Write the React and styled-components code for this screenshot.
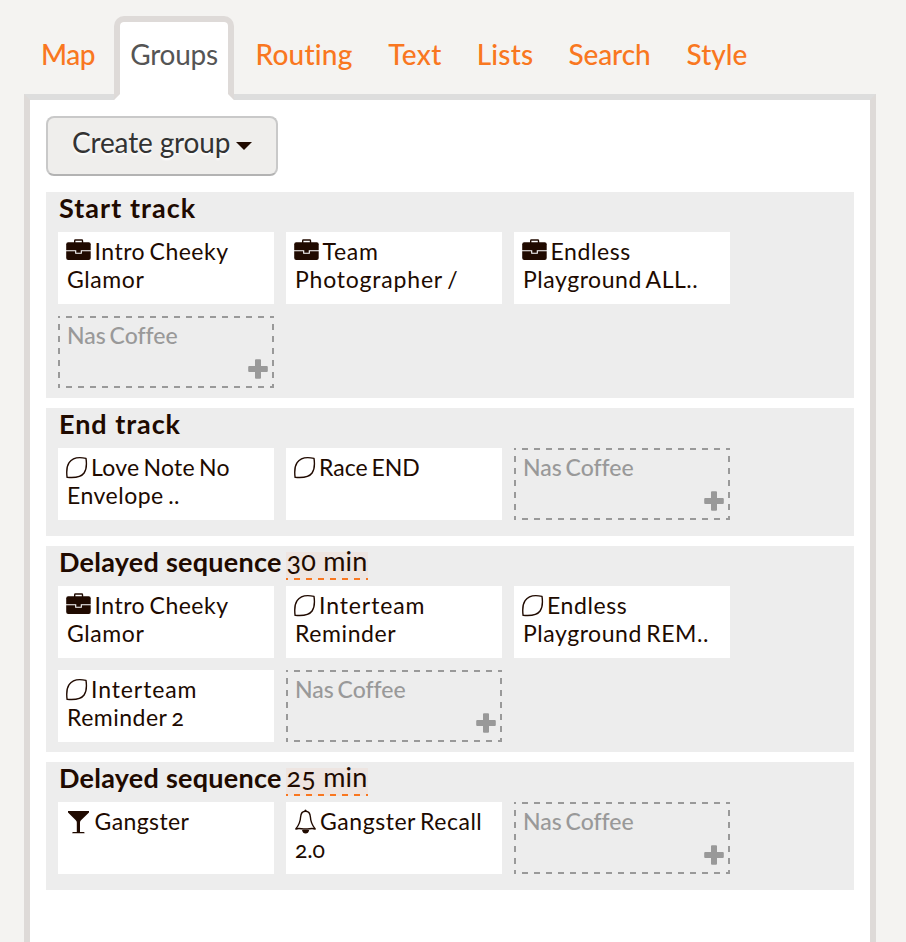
import React from 'react';
import styled, { createGlobalStyle, css } from 'styled-components';

const ink = '#200a00';
const orange = '#f97720';

const GlobalStyle = createGlobalStyle`
  * { box-sizing: border-box; }
  body {
    margin: 0;
    background: #f4f3f1;
    color: ${ink};
    font-family: Lato, "Open Sans", sans-serif;
    font-variant-ligatures: none;
    overflow: hidden;
  }
`;

const Page = styled.div`
  display: flex;
  flex-direction: column;
  height: 942px;
  padding: 16px 30px 0 24px;
`;

const Tabs = styled.nav`
  display: flex;
  height: 84px;
  margin: 0 0 -6px -2px;
  z-index: 1;
`;

const Tab = styled.a`
  width: ${(p) => p.$width}px;
  height: 84px;
  border: 6px solid ${(p) => (p.$active ? '#dedad8' : 'transparent')};
  border-bottom-color: ${(p) => (p.$active ? '#fff' : 'transparent')};
  border-radius: 10px 10px 0 0;
  background: ${(p) => (p.$active ? '#fff' : 'transparent')};
  background-clip: padding-box;
  color: ${(p) => (p.$active ? '#555' : orange)};
  font-size: 28px;
  font-weight: ${(p) => (p.$active ? 400 : 500)};
  line-height: 64px;
  text-align: center;
  white-space: nowrap;
  letter-spacing: ${(p) => p.$track}px;
`;

const Panel = styled.main`
  flex: 1;
  display: flex;
  flex-direction: column;
  gap: 10px;
  padding: 16px;
  border: 6px solid #dedad8;
  border-top-color: #ddd;
  border-bottom: 0;
  background: #fff;
`;

const CreateButton = styled.button`
  display: flex;
  align-items: center;
  align-self: flex-start;
  gap: 6px;
  width: 232px;
  height: 60px;
  margin-bottom: 6px;
  padding: 0 0 8px 24px;
  border: 2px solid #c9c9c9;
  border-bottom-color: #b3b3b3;
  border-radius: 8px;
  background: #efeeec;
  color: #333;
  font: 400 28px/34px Lato, sans-serif;
  letter-spacing: -0.15px;
  text-shadow: 0 2px 2px #fff;
`;

const Caret = styled.span`
  margin-top: 8px;
  border: 8px solid transparent;
  border-top-color: ${ink};
  border-bottom: 0;
`;

const Group = styled.section`
  min-height: 128px;
  padding: 0 12px 10px;
  background: #ededed;
`;

const GroupHeader = styled.header`
  display: flex;
  height: 40px;
  padding-left: 1px;
`;

const GroupTitle = styled.h2`
  margin: 0;
  font-size: 27px;
  font-weight: 700;
  line-height: 31px;
  white-space: nowrap;
  letter-spacing: ${(p) => p.$track}px;
`;

/* 6px dashes on a 12px pitch, opening with a 2px stub at the corner */
const dashes = (direction, color) =>
  `repeating-linear-gradient(${direction}, ${color} 0 2px, transparent 2px 8px, ${color} 8px 12px)`;

const Duration = styled.a`
  width: 82px;
  height: 28px;
  margin: 6px 0 0 4.4px;
  padding-left: 0.5px;
  background: ${dashes('90deg', orange)} bottom / 100% 2px no-repeat, #eee5e1;
  font-size: 27px;
  line-height: 18px;
  white-space: nowrap;
  letter-spacing: 0.2px;
  font-feature-settings: "onum";
`;

const Cards = styled.div`
  display: grid;
  grid-template-columns: repeat(3, 216px);
  grid-auto-rows: 72px;
  gap: 12px;
`;

const cardText = css`
  font-size: 23px;
  line-height: 28px;
  word-spacing: -2px;
`;

const Card = styled.article`
  ${cardText}
  padding: 5px 0 0 8px;
  background: #fff;
  font-feature-settings: "onum";
`;

const Line = styled.div`
  display: flex;
  height: 28px;
  padding-left: ${(p) => (p.$plain ? 1 : 0)}px;
  white-space: pre;
  letter-spacing: ${(p) => p.$track}px;
`;

const DropCard = styled.div`
  ${cardText}
  display: flex;
  flex-direction: column;
  justify-content: space-between;
  padding: 5px 6px 9px 9px;
  background:
    ${dashes('90deg', '#999')} top / 100% 2px no-repeat,
    ${dashes('90deg', '#999')} bottom / 100% 2px no-repeat,
    ${dashes('180deg', '#999')} left / 2px 100% no-repeat,
    ${dashes('180deg', '#999')} right / 2px 100% no-repeat;
  color: #999;
  font-weight: 500;
`;

const PlusIcon = styled.svg`
  align-self: flex-end;
  display: block;
`;

const Glyph = styled.svg`
  flex: none;
  height: 28px;
  width: ${(p) => p.$width}px;
`;

function Icon({ kind }) {
  if (kind === 'case')
    return (
      <Glyph $width={28.5} viewBox="0 0 28.5 28">
        <path d="M8.7 6V3.7Q8.7 3 9.4 3h6.4q.7 0 .7.7V6" fill="none" stroke={ink} strokeWidth="1.4" />
        <rect x="0.2" y="5.3" width="24.5" height="17.7" rx="2" fill={ink} />
        <path d="M0 13.7h9.7M15.3 13.7H25M9.7 13.2v3.1h5.6v-3.1" fill="none" stroke="#fff" strokeWidth="1.1" />
      </Glyph>
    );
  if (kind === 'leaf')
    return (
      <Glyph $width={25} viewBox="0 0 25 28">
        <path
          d="M1.1 24.3C.4 19 .2 14 3.1 9.7 6.7 4.5 14 4 20 5.4c.8 5.5.9 10.6-1.9 14.6C14.5 25.1 7.5 24.9 1.1 24.3Z"
          fill="none"
          stroke={ink}
          strokeWidth="1.4"
          strokeLinejoin="round"
        />
      </Glyph>
    );
  if (kind === 'glass')
    return (
      <Glyph $width={28.5} viewBox="0 0 28.5 28">
        <path d="M2 4h21v1.4l-8 7.9q-1 1-1 2.2v9.4h3.6q1 0 1 1.3H6.2q0-1.3 1-1.3h3.6v-9.4q0-1.2-1-2.2L2 5.4Z" fill={ink} />
      </Glyph>
    );
  return (
    <Glyph $width={26} viewBox="0 0 26 28">
      <path
        d="M11.5 4.2C8 4.2 6.8 7 6.6 10c-.3 6-1.8 8.3-4.8 12 3.2-1.1 5.3 0 9.7 0s6.5-1.1 9.7 0c-3-3.7-4.5-6-4.8-12-.2-3-1.4-5.8-4.9-5.8Z"
        fill="none"
        stroke={ink}
        strokeWidth="1.4"
        strokeLinejoin="round"
      />
      <path d="M10.3 4.5a1.2 2 0 0 1 2.4 0ZM8 23h7.2q-.7 3.5-3.6 3.5T8 23Z" fill={ink} />
    </Glyph>
  );
}

const tabs = [
  ['Map', 92, -0.4],
  ['Groups', 120, -0.25],
  ['Routing', 140, 0.2],
  ['Text', 82, 0.3],
  ['Lists', 98, 0.2],
  ['Search', 111, -0.1],
  ['Style', 104, 0],
];

const groups = [
  {
    title: 'Start track',
    track: 1.05,
    cards: [
      { icon: 'case', lines: [['Intro Cheeky', 0.5], ['Glamor', 0.6]] },
      { icon: 'case', lines: [['Team', 0.7], ['Photographer /', 0.8]] },
      { icon: 'case', lines: [['Endless', 0.6], ['Playground ALL..', 0.55]] },
    ],
  },
  {
    title: 'End track',
    track: 0.95,
    cards: [
      { icon: 'leaf', lines: [['Love Note No', 0.25], ['Envelope ..', 0.5]] },
      { icon: 'leaf', lines: [['Race END', 0]] },
    ],
  },
  {
    title: 'Delayed sequence',
    track: 0.25,
    duration: '30 min',
    cards: [
      { icon: 'case', lines: [['Intro Cheeky', 0.5], ['Glamor', 0.6]] },
      { icon: 'leaf', lines: [['Interteam', 0.9], ['Reminder', 0.6]] },
      { icon: 'leaf', lines: [['Endless', 0.6], ['Playground REM..', 0.55]] },
      { icon: 'leaf', lines: [['Interteam', 0.9], ['Reminder 2', 0.5]] },
    ],
  },
  {
    title: 'Delayed sequence',
    track: 0.25,
    duration: '25 min',
    cards: [
      { icon: 'glass', lines: [['Gangster', 0.4]] },
      { icon: 'bell', lines: [['Gangster Recall', 0.55], ['2.0', -0.2]] },
    ],
  },
];

export default function App() {
  return (
    <Page>
      <GlobalStyle />
      <Tabs>
        {tabs.map(([name, width, track]) => (
          <Tab key={name} $width={width} $track={track} $active={name === 'Groups'}>
            {name}
          </Tab>
        ))}
      </Tabs>
      <Panel>
        <CreateButton>
          Create group
          <Caret />
        </CreateButton>
        {groups.map((group, g) => (
          <Group key={g}>
            <GroupHeader>
              <GroupTitle $track={group.track}>{group.title}</GroupTitle>
              {group.duration && <Duration>{group.duration}</Duration>}
            </GroupHeader>
            <Cards>
              {group.cards.map((card, c) => (
                <Card key={c}>
                  {card.lines.map(([text, track], i) => (
                    <Line key={i} $track={track} $plain={i > 0}>
                      {i === 0 && <Icon kind={card.icon} />}
                      {text}
                    </Line>
                  ))}
                </Card>
              ))}
              <DropCard>
                Nas Coffee
                <PlusIcon width="20" height="20" viewBox="0 0 20 20">
                  <path d="M1.2 7H7V1.2Q7 .2 8 .2h4q1 0 1 1V7h5.8q1 0 1 1v4q0 1-1 1H13v5.8q0 1-1 1H8q-1 0-1-1V13H1.2q-1 0-1-1V8q0-1 1-1Z" fill="#999" />
                </PlusIcon>
              </DropCard>
            </Cards>
          </Group>
        ))}
      </Panel>
    </Page>
  );
}
